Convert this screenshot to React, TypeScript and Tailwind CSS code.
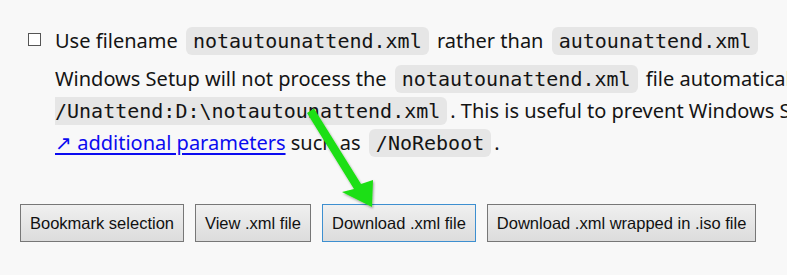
import React from "react";

const body = "font-['Noto_Sans','Open_Sans',sans-serif]";
const mono = "font-['DejaVu_Sans_Mono','Liberation_Mono',monospace]";

function Code({ children, cls = "rounded-md px-[7px]" }: { children: React.ReactNode; cls?: string }) {
  return (
    <code className={`${mono} text-[20px] bg-[#e6e6e6] text-[#141414] py-[2px] mx-[3px] ${cls}`}>
      {children}
    </code>
  );
}

function Btn({ children, focus = false }: { children: React.ReactNode; focus?: boolean }) {
  return (
    <button
      className={`font-['Liberation_Sans',Arial,sans-serif] text-[16.5px] leading-[20px] text-[#111] px-[9px] py-[8px] border bg-gradient-to-b from-[#f0f0f0] to-[#dcdcdc] whitespace-nowrap ${
        focus ? "border-[#3d8fd0]" : "border-[#777777]"
      }`}
    >
      {children}
    </button>
  );
}

export default function App() {
  return (
    <div className={`relative w-[787px] h-[275px] overflow-hidden bg-[#f8f8f8] text-[#141414] ${body}`}>
      <div className="pt-[25px] pl-[28px] w-[1100px]">
        <div className="flex items-start">
          <div className="w-[27px] h-[31px] flex items-center">
            <span className="block w-[13px] h-[13px] border border-[#555] bg-white mt-[-3px]" />
          </div>
          <div className="leading-[31px] text-[20px] whitespace-nowrap">
            Use filename <Code>notautounattend.xml</Code> rather than <Code>autounattend.xml</Code>
          </div>
        </div>
        <div className="pl-[27px] mt-[6px] text-[20px] leading-[31px] whitespace-nowrap">
          <div>
            Windows Setup will not process the <Code>notautounattend.xml</Code> file automatically. Use{" "}
            <Code cls="rounded-l-md pl-[7px]">setup.exe</Code>
          </div>
          <div>
            <Code cls="rounded-r-md pr-[7px] ml-0">/Unattend:D:\notautounattend.xml</Code>. This is useful to prevent
            Windows Setup from running automatically.
          </div>
          <div>
            <a href="#" className="text-[#0b0bf0] underline underline-offset-[3px]">
              ↗ additional parameters
            </a>{" "}
            such as <Code>/NoReboot</Code>.
          </div>
        </div>
      </div>
      <div className="flex gap-[11px] pl-[20px] mt-[45px]">
        <Btn>Bookmark selection</Btn>
        <Btn>View .xml file</Btn>
        <Btn focus>Download .xml file</Btn>
        <Btn>Download .xml wrapped in .iso file</Btn>
      </div>
      <svg className="absolute left-0 top-0 pointer-events-none" width="787" height="275">
        <defs>
          <filter id="sh" x="-20%" y="-20%" width="140%" height="140%">
            <feDropShadow dx="1" dy="1.5" stdDeviation="1.2" floodColor="#000" floodOpacity="0.35" />
          </filter>
        </defs>
        <polygon
          points="307,113 314,108.5 361,184 373,180 372,207 342,192 354,189"
          fill="#1fdf12"
          filter="url(#sh)"
        />
      </svg>
    </div>
  );
}
